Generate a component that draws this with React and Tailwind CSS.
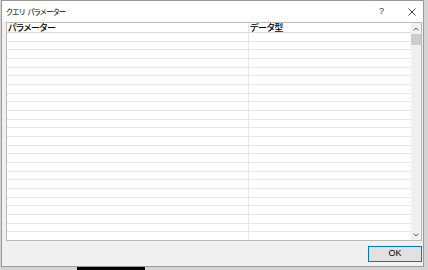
import React from "react";

const rows = Array.from({ length: 24 });

function ScrollBar() {
  return (
    <div className="w-[10px] flex flex-col bg-[#f0f0f0]">
      <div className="h-[11px] flex items-center justify-center">
        <svg width="6" height="4" viewBox="0 0 6 4">
          <path d="M0.5 3.5 L3 1 L5.5 3.5" fill="none" stroke="#606060" strokeWidth="1" />
        </svg>
      </div>
      <div className="h-[11px] bg-[#cdcdcd]" />
      <div className="flex-1" />
      <div className="h-[10px] flex items-center justify-center">
        <svg width="6" height="4" viewBox="0 0 6 4">
          <path d="M0.5 0.5 L3 3 L5.5 0.5" fill="none" stroke="#606060" strokeWidth="1" />
        </svg>
      </div>
    </div>
  );
}

export default function App() {
  return (
    <div
      className="w-[428px] h-[270px] bg-[#d4d4d4] overflow-hidden flex flex-col [font-feature-settings:'palt']"
      style={{ fontFamily: '"Noto Sans CJK JP", "Noto Sans", sans-serif' }}
    >
      <div className="ml-[1px] w-[423px] h-[267px] border border-[#9a9a9a] bg-[#f0f0f0] flex flex-col">
        {/* title bar */}
        <div className="h-[21px] bg-white flex items-center gap-[3px] pl-[4px] text-black text-[7.5px] leading-none tracking-[-0.5px]">
          <span>クエリ</span>
          <span>パラメーター</span>
          <div className="flex-1" />
          <span className="text-[9px] tracking-normal mr-[21px] text-[#333]" style={{ fontFamily: '"Liberation Sans", sans-serif' }}>?</span>
          <svg width="8" height="8" viewBox="0 0 8 8" className="mr-[7px]">
            <path d="M0.5 0.5 L7.5 7.5 M7.5 0.5 L0.5 7.5" stroke="#333" strokeWidth="0.9" />
          </svg>
        </div>

        {/* grid */}
        <div className="ml-[4px] mr-[1px] h-[219px] bg-white border border-[#b9b9b9] flex">
          <div className="flex-1 flex flex-col">
            <div className="h-[10px] flex border-b border-[#dadada] text-[9px] leading-[10px] font-medium text-black tracking-[-0.3px]">
              <div className="w-[242px] border-r border-[#e3e3e3] pl-[1px]">パラメーター</div>
              <div className="flex-1 pl-[1px]">データ型</div>
            </div>
            <div className="flex-1 flex flex-col">
              {rows.map((_, i) => (
                <div
                  key={i}
                  className={
                    "flex-1 flex " + (i < rows.length - 1 ? "border-b border-[#e6e6e6]" : "")
                  }
                >
                  <div className="w-[242px] border-r border-[#e8e8e8]" />
                  <div className="flex-1" />
                </div>
              ))}
            </div>
          </div>
          <ScrollBar />
        </div>

        {/* footer */}
        <div className="flex-1 flex items-center justify-end pr-[1px]">
          <button className="w-[54px] h-[16px] bg-[#e1e1e1] border border-[#0078d7] text-[9px] leading-none text-black" style={{ fontFamily: '"Liberation Sans", sans-serif' }}>
            OK
          </button>
        </div>
      </div>
      <div className="ml-[77px] w-[68px] h-[3px] bg-black" />
    </div>
  );
}
